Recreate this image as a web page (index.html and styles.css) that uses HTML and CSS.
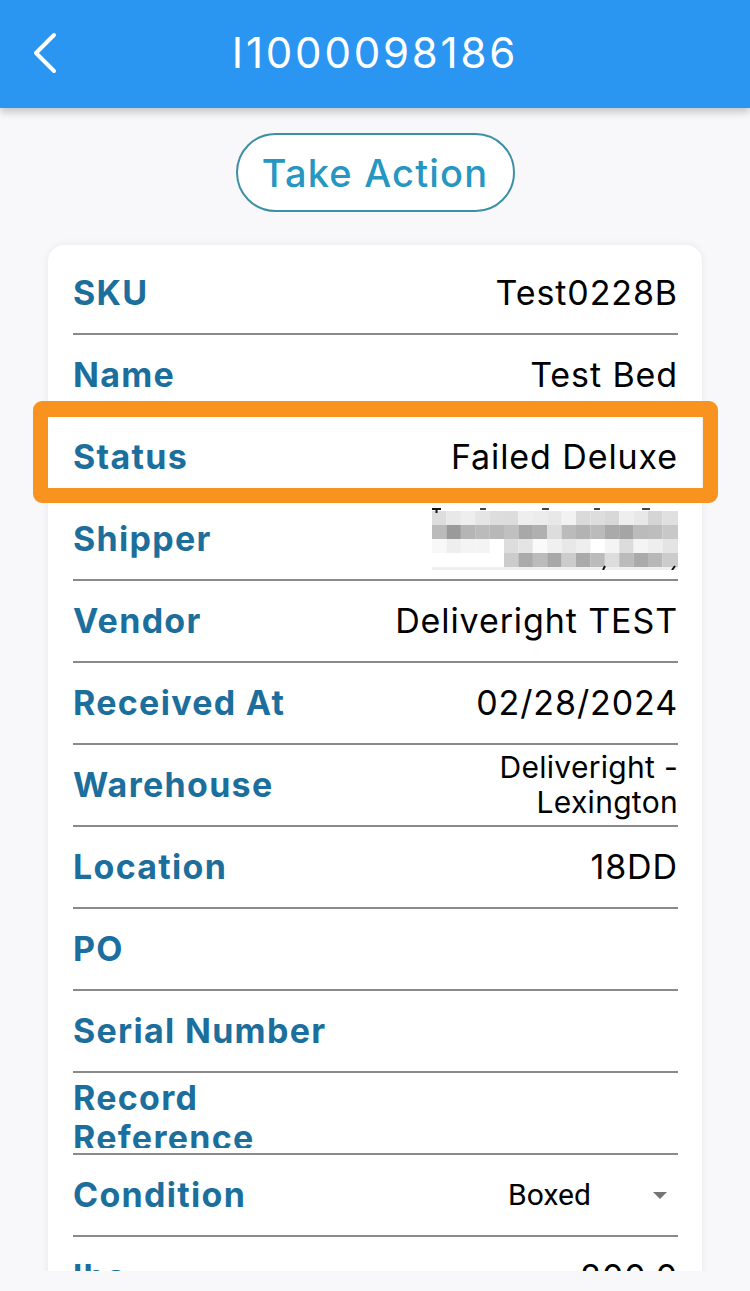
FILE: index.html
```html
<!DOCTYPE html>
<html lang="en">
<head>
    <meta charset="UTF-8">
    <meta name="viewport" content="width=device-width, initial-scale=1.0">
    <title>I1000098186</title>
    <link rel="stylesheet" href="styles.css">
</head>
<body>
    <div class="topBar">
        <span class="backBtn">
            <svg width="26" height="42" viewBox="0 0 26 42">
                <path d="M22 3 L4 21 L22 39" fill="none" stroke="#fff" stroke-width="4" stroke-linecap="round" stroke-linejoin="round"/>
            </svg>
        </span>
        <h1 class="title">I1000098186</h1>
    </div>

    <div class="scrollArea">
        <button type="button" class="actionBtn">Take Action</button>

        <div class="card">
            <div class="row">
                <div class="label">SKU</div>
                <div class="value">Test0228B</div>
            </div>
            <div class="row">
                <div class="label">Name</div>
                <div class="value">Test Bed</div>
            </div>
            <div class="row highlighted">
                <div class="label">Status</div>
                <div class="value">Failed Deluxe</div>
                <div class="highlightBox"></div>
            </div>
            <div class="row">
                <div class="label">Shipper</div>
                <div class="value">
                    <!-- shipper name is blurred in the screenshot -->
                    <svg class="mosaic" width="246" height="62" viewBox="0 0 246 62">
                        <rect x="0" y="0" width="246" height="62" fill="#fff"/>
                        <g>
                            <rect x="0" y="3" width="14.5" height="14" fill="#ddd"/>
                            <rect x="14.4" y="3" width="14.5" height="14" fill="#e8e8e8"/>
                            <rect x="28.8" y="3" width="14.5" height="14" fill="#eee"/>
                            <rect x="43.2" y="3" width="14.5" height="14" fill="#e5e5e5"/>
                            <rect x="57.6" y="3" width="14.5" height="14" fill="#ddd"/>
                            <rect x="72" y="3" width="14.5" height="14" fill="#dcdcdc"/>
                            <rect x="86.4" y="3" width="14.5" height="14" fill="#eee"/>
                            <rect x="100.8" y="3" width="14.5" height="14" fill="#ececec"/>
                            <rect x="115.2" y="3" width="14.5" height="14" fill="#e8e8e8"/>
                            <rect x="129.6" y="3" width="14.5" height="14" fill="#f2f2f2"/>
                            <rect x="144" y="3" width="14.5" height="14" fill="#dadada"/>
                            <rect x="158.4" y="3" width="14.5" height="14" fill="#ddd"/>
                            <rect x="172.8" y="3" width="14.5" height="14" fill="#d8d8d8"/>
                            <rect x="187.2" y="3" width="14.5" height="14" fill="#eee"/>
                            <rect x="201.6" y="3" width="14.5" height="14" fill="#e8e8e8"/>
                            <rect x="216" y="3" width="14.5" height="14" fill="#d5d5d5"/>
                            <rect x="230.4" y="3" width="15.6" height="14" fill="#e0e0e0"/>
                        </g>
                        <g>
                            <rect x="0" y="17" width="14.5" height="14" fill="#bbb"/>
                            <rect x="14.4" y="17" width="14.5" height="14" fill="#9a9a9a"/>
                            <rect x="28.8" y="17" width="14.5" height="14" fill="#b5b5b5"/>
                            <rect x="43.2" y="17" width="14.5" height="14" fill="#bbb"/>
                            <rect x="57.6" y="17" width="14.5" height="14" fill="#b8b8b8"/>
                            <rect x="72" y="17" width="14.5" height="14" fill="#c0c0c0"/>
                            <rect x="86.4" y="17" width="14.5" height="14" fill="#a8a8a8"/>
                            <rect x="100.8" y="17" width="14.5" height="14" fill="#b0b0b0"/>
                            <rect x="115.2" y="17" width="14.5" height="14" fill="#ddd"/>
                            <rect x="129.6" y="17" width="14.5" height="14" fill="#bbb"/>
                            <rect x="144" y="17" width="14.5" height="14" fill="#b3b3b3"/>
                            <rect x="158.4" y="17" width="14.5" height="14" fill="#bbb"/>
                            <rect x="172.8" y="17" width="14.5" height="14" fill="#aaa"/>
                            <rect x="187.2" y="17" width="14.5" height="14" fill="#a5a5a5"/>
                            <rect x="201.6" y="17" width="14.5" height="14" fill="#bbb"/>
                            <rect x="216" y="17" width="14.5" height="14" fill="#bdbdbd"/>
                            <rect x="230.4" y="17" width="15.6" height="14" fill="#c8c8c8"/>
                        </g>
                        <g>
                            <rect x="0" y="31" width="14.5" height="14" fill="#f8f8f8"/>
                            <rect x="14.4" y="31" width="14.5" height="14" fill="#eee"/>
                            <rect x="28.8" y="31" width="14.5" height="14" fill="#f4f4f4"/>
                            <rect x="43.2" y="31" width="14.5" height="14" fill="#f4f4f4"/>
                            <rect x="72" y="31" width="14.5" height="14" fill="#ddd"/>
                            <rect x="86.4" y="31" width="14.5" height="14" fill="#e4e4e4"/>
                            <rect x="100.8" y="31" width="14.5" height="14" fill="#fafafa"/>
                            <rect x="115.2" y="31" width="14.5" height="14" fill="#f0f0f0"/>
                            <rect x="129.6" y="31" width="14.5" height="14" fill="#e8e8e8"/>
                            <rect x="144" y="31" width="14.5" height="14" fill="#eee"/>
                            <rect x="172.8" y="31" width="14.5" height="14" fill="#f4f4f4"/>
                            <rect x="187.2" y="31" width="14.5" height="14" fill="#dcdcdc"/>
                            <rect x="201.6" y="31" width="14.5" height="14" fill="#f4f4f4"/>
                            <rect x="216" y="31" width="14.5" height="14" fill="#eee"/>
                            <rect x="230.4" y="31" width="15.6" height="14" fill="#e4e4e4"/>
                        </g>
                        <g>
                            <rect x="72" y="45" width="14.5" height="14" fill="#ccc"/>
                            <rect x="86.4" y="45" width="14.5" height="14" fill="#aaa"/>
                            <rect x="100.8" y="45" width="14.5" height="14" fill="#bbb"/>
                            <rect x="115.2" y="45" width="14.5" height="14" fill="#a8a8a8"/>
                            <rect x="129.6" y="45" width="14.5" height="14" fill="#ccc"/>
                            <rect x="144" y="45" width="14.5" height="14" fill="#aaa"/>
                            <rect x="158.4" y="45" width="14.5" height="14" fill="#bbb"/>
                            <rect x="172.8" y="45" width="14.5" height="14" fill="#ddd"/>
                            <rect x="187.2" y="45" width="14.5" height="14" fill="#bbb"/>
                            <rect x="201.6" y="45" width="14.5" height="14" fill="#aaa"/>
                            <rect x="216" y="45" width="14.5" height="14" fill="#b8b8b8"/>
                            <rect x="230.4" y="45" width="15.6" height="14" fill="#ccc"/>
                        </g>
                        <rect x="0" y="59" width="246" height="3" fill="#f0f0f0"/>
                        <rect x="0" y="0" width="9" height="2" fill="#111"/>
                        <rect x="3.5" y="0" width="2" height="5" fill="#111"/>
                        <rect x="48" y="0" width="6" height="2" fill="#444"/>
                        <rect x="110" y="0" width="7" height="2" fill="#444"/>
                        <rect x="162" y="0" width="6" height="2" fill="#444"/>
                        <rect x="210" y="0" width="8" height="2" fill="#444"/>
                        <path d="M173 58 L171 62" stroke="#111" stroke-width="2"/>
                        <path d="M243 58 L240 62" stroke="#111" stroke-width="2"/>
                    </svg>
                </div>
            </div>
            <div class="row">
                <div class="label">Vendor</div>
                <div class="value">Deliveright TEST</div>
            </div>
            <div class="row">
                <div class="label">Received At</div>
                <div class="value">02/28/2024</div>
            </div>
            <div class="row">
                <div class="label">Warehouse</div>
                <div class="value small">Deliveright -<br>Lexington</div>
            </div>
            <div class="row">
                <div class="label">Location</div>
                <div class="value">18DD</div>
            </div>
            <div class="row">
                <div class="label">PO</div>
                <div class="value"></div>
            </div>
            <div class="row">
                <div class="label">Serial Number</div>
                <div class="value"></div>
            </div>
            <div class="row">
                <div class="label">Record Reference</div>
                <div class="value"></div>
            </div>
            <div class="row">
                <div class="label">Condition</div>
                <div class="value">
                    <div class="dropdown">
                        <span>Boxed</span>
                        <span class="caret"></span>
                    </div>
                </div>
            </div>
            <div class="row">
                <div class="label">lbs</div>
                <div class="value">200.0</div>
            </div>
            <div class="row">
                <div class="label">Dimensions</div>
                <div class="value"></div>
            </div>
        </div>
    </div>
</body>
</html>
```

FILE: styles.css
```css
body {
    margin: 0;
    padding: 0;
    font-family: Inter, "Liberation Sans", sans-serif;
    background-color: #f8f7fa;
    height: 1291px;
    overflow: hidden;
}
.topBar {
    position: relative;
    z-index: 2;
    height: 108px;
    background-color: #2a96f2;
    box-shadow: 0 4px 8px rgba(0, 0, 0, 0.22);
    display: flex;
    align-items: center;
    justify-content: center;
}
.backBtn {
    position: absolute;
    left: 32px;
    top: 32px;
}
.title {
    margin: 0 0 4px 0;
    color: #fff;
    font-size: 42px;
    font-weight: 400;
    letter-spacing: 2.8px;
}
.scrollArea {
    height: 1163px;
    overflow: hidden;
    padding-top: 25px;
    box-sizing: border-box;
}
.actionBtn {
    display: block;
    margin: 0 auto 33px auto;
    width: 279px;
    height: 79px;
    background-color: #fff;
    border: 2px solid #3c8fa6;
    border-radius: 40px;
    color: #2597c1;
    font-family: Inter, "Liberation Sans", sans-serif;
    font-size: 38px;
    font-weight: 500;
    letter-spacing: 1.2px;
    padding: 0;
}
.card {
    margin: 0 48px;
    padding: 8px 24px 0 25px;
    background-color: #fff;
    border-radius: 16px;
    box-shadow: 0 0 8px rgba(0, 0, 0, 0.07);
}
.row {
    position: relative;
    height: 82px;
    box-sizing: border-box;
    border-bottom: 2px solid #8a8a8a;
    display: flex;
    align-items: center;
    justify-content: space-between;
}
.label {
    flex: 0 0 50%;
    max-height: 70px;
    overflow: hidden;
    color: #1c6f9c;
    font-size: 34px;
    font-weight: 700;
    letter-spacing: 1.3px;
    line-height: 40px;
}
.value {
    flex: 1;
    text-align: right;
    color: #000;
    font-size: 34px;
    letter-spacing: 0.9px;
    line-height: 40px;
}
.value.small {
    font-size: 30px;
    letter-spacing: 0.3px;
    line-height: 35px;
}
.mosaic {
    display: block;
    margin-left: auto;
}
.dropdown {
    width: 170px;
    margin-left: auto;
    display: flex;
    align-items: center;
    justify-content: space-between;
    font-family: Roboto, "Liberation Sans", sans-serif;
    font-size: 30px;
    letter-spacing: 0;
    padding-right: 11px;
    box-sizing: border-box;
}
.caret {
    width: 0;
    height: 0;
    border-left: 7px solid transparent;
    border-right: 7px solid transparent;
    border-top: 7px solid #757575;
}
.highlightBox {
    position: absolute;
    left: -40px;
    right: -40px;
    top: -16px;
    bottom: -6px;
    border: 15px solid #f7931e;
    border-top-width: 16px;
    border-radius: 9px;
    pointer-events: none;
}
```
